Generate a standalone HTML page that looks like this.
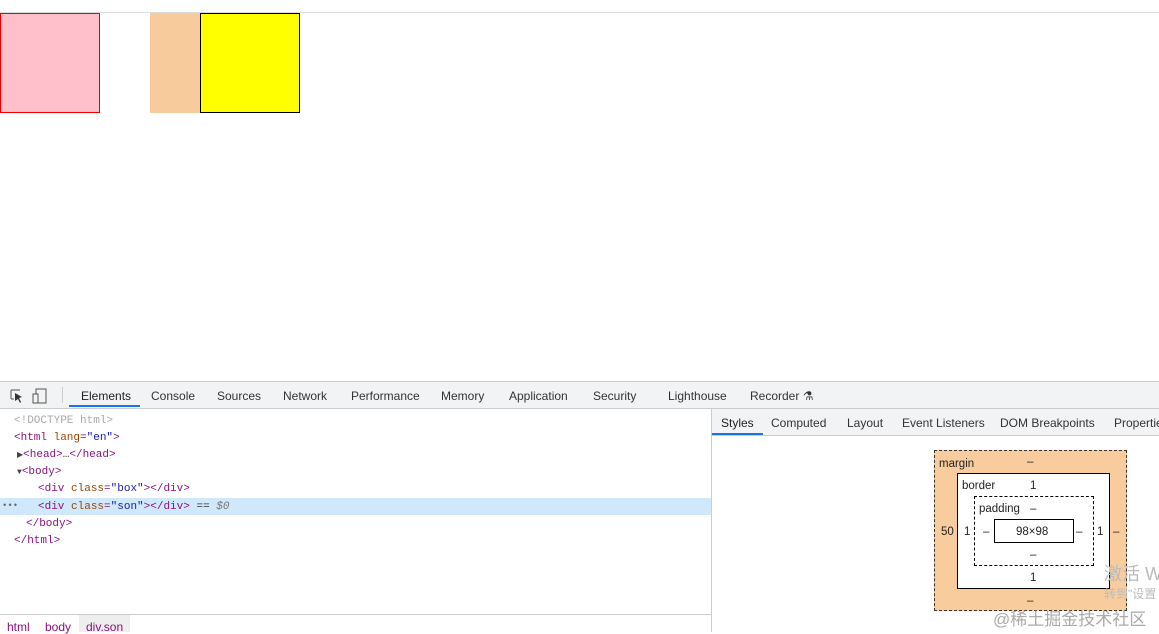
<!DOCTYPE html>
<html><head><style>
*{margin:0;padding:0;box-sizing:border-box}
body{width:1159px;height:632px;overflow:hidden;background:#fff;font-family:"Liberation Sans","Noto Sans CJK SC",sans-serif;position:relative}
.a{position:absolute;white-space:nowrap}
.mono{font-family:"Liberation Mono",monospace;font-size:11px}
.tab{position:absolute;top:389px;font-size:12px;color:#333;white-space:nowrap}
.st{position:absolute;top:416px;font-size:12px;color:#333;white-space:nowrap}
.t{color:#881280}.at{color:#994500}.v{color:#1a1aa6}
.bm{font-size:11.5px;color:#222;position:absolute}
</style></head><body>
<div class="a" style="top:12px;left:0;width:1159px;height:1px;background:#ddd"></div>
<div class="a" style="top:13px;left:0;width:100px;height:100px;background:#ffc0cb;border:1px solid #e00"></div>
<div class="a" style="top:13px;left:150px;width:50px;height:100px;background:#f7cb9b"></div>
<div class="a" style="top:13px;left:200px;width:100px;height:100px;background:#ff0;border:1px solid #000"></div>

<div class="a" style="top:381px;left:0;width:1159px;height:28px;background:#f1f3f4;border-top:1px solid #ccc;border-bottom:1px solid #ccc"></div>
<svg class="a" style="left:9px;top:388px" width="40" height="16"><path d="M2 2h9M2 2v9M2 11h3" stroke="#555" fill="none"/><path d="M6 5l7 4-3 1 2 4-1 1-2-4-3 2z" fill="#333"/><rect x="27" y="1" width="10" height="14" fill="none" stroke="#555"/><rect x="24" y="6" width="5" height="9" fill="#f1f3f4" stroke="#555"/></svg>
<div class="a" style="left:62px;top:387px;width:1px;height:16px;background:#ccc"></div>
<div class="tab" style="left:81px;color:#222">Elements</div>
<div class="a" style="left:69px;top:405px;width:71px;height:2px;background:#1a73e8"></div>
<div class="tab" style="left:151px">Console</div>
<div class="tab" style="left:217px">Sources</div>
<div class="tab" style="left:283px">Network</div>
<div class="tab" style="left:351px">Performance</div>
<div class="tab" style="left:441px">Memory</div>
<div class="tab" style="left:509px">Application</div>
<div class="tab" style="left:593px">Security</div>
<div class="tab" style="left:668px">Lighthouse</div>
<div class="tab" style="left:750px">Recorder ⚗</div>

<div class="a" style="top:498px;left:0;width:711px;height:17px;background:#cfe8fc"></div>
<div class="a mono" style="left:14px;top:415px;color:#aaa">&lt;!DOCTYPE html&gt;</div>
<div class="a mono t" style="left:14px;top:432px">&lt;html <span class="at">lang</span>=<span class="v">"en"</span>&gt;</div>
<div class="a mono t" style="left:17px;top:449px"><span style="color:#444;font-size:8px">▶</span>&lt;head&gt;<span style="color:#333">…</span>&lt;/head&gt;</div>
<div class="a mono t" style="left:17px;top:466px"><span style="color:#444;font-size:8px">▼</span>&lt;body&gt;</div>
<div class="a mono t" style="left:38px;top:483px">&lt;div <span class="at">class</span>=<span class="v">"box"</span>&gt;&lt;/div&gt;</div>
<div class="a mono" style="left:2px;top:501px;color:#666;font-size:9px">•••</div>
<div class="a mono t" style="left:38px;top:501px">&lt;div <span class="at">class</span>=<span class="v">"son"</span>&gt;&lt;/div&gt; <span style="color:#333">==</span> <i style="color:#777">$0</i></div>
<div class="a mono t" style="left:26px;top:518px">&lt;/body&gt;</div>
<div class="a mono t" style="left:14px;top:535px">&lt;/html&gt;</div>

<div class="a" style="top:614px;left:0;width:711px;height:1px;background:#ccc"></div>
<div class="a" style="top:615px;left:79px;width:51px;height:17px;background:#eee"></div>
<div class="a" style="left:7px;top:620px;font-size:12px;color:#881280">html</div>
<div class="a" style="left:45px;top:620px;font-size:12px;color:#881280">body</div>
<div class="a" style="left:86px;top:620px;font-size:12px;color:#881280">div.son</div>

<div class="a" style="top:409px;left:711px;width:1px;height:223px;background:#ccc"></div>
<div class="a" style="top:409px;left:712px;width:447px;height:27px;background:#f1f3f4;border-bottom:1px solid #ccc"></div>
<div class="st" style="left:721px;color:#222">Styles</div>
<div class="a" style="left:712px;top:433px;width:51px;height:2px;background:#1a73e8"></div>
<div class="st" style="left:771px">Computed</div>
<div class="st" style="left:847px">Layout</div>
<div class="st" style="left:902px">Event Listeners</div>
<div class="st" style="left:1000px">DOM Breakpoints</div>
<div class="st" style="left:1114px">Properties</div>

<div class="a" style="left:934px;top:450px;width:193px;height:161px;background:#f9cc9d;border:1px dashed #333"></div>
<div class="a" style="left:957px;top:473px;width:153px;height:116px;background:#fff;border:1px solid #000"></div>
<div class="a" style="left:974px;top:496px;width:120px;height:70px;background:#fff;border:1px dashed #000"></div>
<div class="a" style="left:994px;top:519px;width:80px;height:24px;border:1px solid #000"></div>
<div class="bm" style="left:939px;top:458px">margin</div>
<div class="bm" style="left:1027px;top:456px">–</div>
<div class="bm" style="left:962px;top:480px">border</div>
<div class="bm" style="left:1030px;top:480px">1</div>
<div class="bm" style="left:979px;top:503px">padding</div>
<div class="bm" style="left:1030px;top:503px">–</div>
<div class="bm" style="left:1016px;top:526px">98×98</div>
<div class="bm" style="left:941px;top:526px">50</div>
<div class="bm" style="left:964px;top:526px">1</div>
<div class="bm" style="left:983px;top:526px">–</div>
<div class="bm" style="left:1076px;top:526px">–</div>
<div class="bm" style="left:1097px;top:526px">1</div>
<div class="bm" style="left:1113px;top:526px">–</div>
<div class="bm" style="left:1030px;top:549px">–</div>
<div class="bm" style="left:1030px;top:572px">1</div>
<div class="bm" style="left:1027px;top:595px">–</div>
<div class="a" style="left:1104px;top:560px;font-size:18px;color:#bbb">激活 W</div>
<div class="a" style="left:1104px;top:585px;font-size:12px;color:#bbb">转到"设置</div>
<div class="a" style="left:993px;top:605px;font-size:17px;color:#aaa">@稀土掘金技术社区</div>
</body></html>
